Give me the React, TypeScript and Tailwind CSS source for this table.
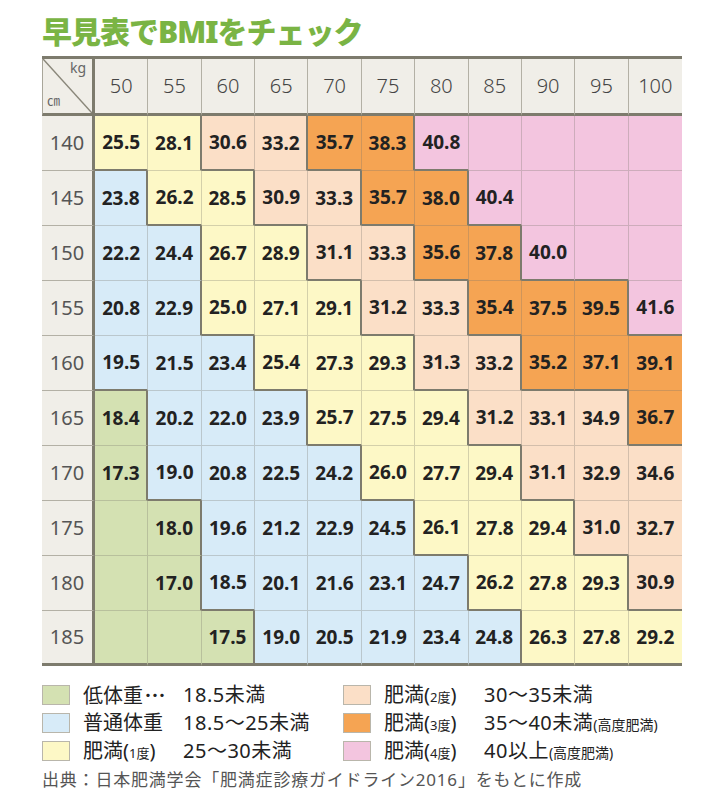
import React from 'react'

const heights = [140, 145, 150, 155, 160, 165, 170, 175, 180, 185]
const weights = [50, 55, 60, 65, 70, 75, 80, 85, 90, 95, 100]

// null = blank cell (colour still shown)
const rows: (string | null)[][] = [
  ['25.5', '28.1', '30.6', '33.2', '35.7', '38.3', '40.8', null, null, null, null],
  ['23.8', '26.2', '28.5', '30.9', '33.3', '35.7', '38.0', '40.4', null, null, null],
  ['22.2', '24.4', '26.7', '28.9', '31.1', '33.3', '35.6', '37.8', '40.0', null, null],
  ['20.8', '22.9', '25.0', '27.1', '29.1', '31.2', '33.3', '35.4', '37.5', '39.5', '41.6'],
  ['19.5', '21.5', '23.4', '25.4', '27.3', '29.3', '31.3', '33.2', '35.2', '37.1', '39.1'],
  ['18.4', '20.2', '22.0', '23.9', '25.7', '27.5', '29.4', '31.2', '33.1', '34.9', '36.7'],
  ['17.3', '19.0', '20.8', '22.5', '24.2', '26.0', '27.7', '29.4', '31.1', '32.9', '34.6'],
  [null, '18.0', '19.6', '21.2', '22.9', '24.5', '26.1', '27.8', '29.4', '31.0', '32.7'],
  [null, '17.0', '18.5', '20.1', '21.6', '23.1', '24.7', '26.2', '27.8', '29.3', '30.9'],
  [null, null, '17.5', '19.0', '20.5', '21.9', '23.4', '24.8', '26.3', '27.8', '29.2'],
]

const bgs = [
  'bg-[#d4e1b2]',
  'bg-[#d7ebf8]',
  'bg-[#fdf8c6]',
  'bg-[#fbdfc7]',
  'bg-[#f5a453]',
  'bg-[#f3c5df]',
]

const catOf = (r: number, c: number) => {
  const v = rows[r][c]
  if (v === null) return r < 5 ? 5 : 0
  const n = parseFloat(v)
  if (n < 18.5) return 0
  if (n < 25) return 1
  if (n < 30) return 2
  if (n < 35) return 3
  if (n < 40) return 4
  return 5
}

const font = { fontFamily: '"Noto Sans", "Noto Sans CJK JP", sans-serif' }

const Legend = ({
  color,
  label,
  deg,
  dots,
  value,
  note,
}: {
  color: string
  label: string
  deg?: string
  dots?: boolean
  value: string
  note?: string
}) => (
  <div className="flex items-center h-[28px]">
    <span className={`w-[28px] h-[20px] border border-[#b9b6ab] ${color}`} />
    <span className="ml-[13px] w-[100px] whitespace-nowrap">
      {label}
      {dots ? <span className="font-['Noto_Sans_CJK_JP'] tracking-[-3px]">･･･</span> : null}
      {deg ? (
        <>
          (<span className="text-[13px]">{deg}</span>)
        </>
      ) : null}
    </span>
    <span className="whitespace-nowrap tracking-[0.5px]">
      {value}
      {note ? <span className="text-[14px] tracking-normal">(高度肥満)</span> : null}
    </span>
  </div>
)

export default function App() {
  return (
    <div className="w-[720px] h-[811px] bg-white pl-[42px] pt-[6px]" style={font}>
      <h1 className="h-[50px] flex items-center text-[30px] font-black tracking-[-1px] text-[#7ab444]">
        早見表でBMIをチェック
      </h1>

      <div className="w-[640px] grid grid-cols-[53px_repeat(11,minmax(0,1fr))] border-t-[3px] border-[#7d7b6d]">
        <div className="relative h-[57px] bg-[#f0eee8] border-l border-l-[#a9a69a] border-r-[3px] border-r-[#7d7b6d] border-b-[3px] border-b-[#7d7b6d]">
          <svg className="absolute inset-0 w-full h-full" viewBox="0 0 49 54" preserveAspectRatio="none">
            <line x1="0" y1="0" x2="49" y2="54" stroke="#8a877a" strokeWidth="1.5" />
          </svg>
          <span className="absolute right-[6px] top-[2px] text-[14px] leading-none text-[#666]">kg</span>
          <span className="absolute left-[4px] bottom-[6px] text-[13px] leading-none text-[#666]">㎝</span>
        </div>
        {weights.map((w, i) => (
          <div
            key={w}
            className={`h-[57px] flex items-center justify-center bg-[#f0eee8] text-[20px] font-light text-[#444] border-b-[3px] border-b-[#7d7b6d] ${
              i < weights.length - 1 ? 'border-r border-r-[#b3b0a5]' : ''
            }`}
          >
            {w}
          </div>
        ))}

        {heights.map((h, r) => (
          <React.Fragment key={h}>
            <div
              className={`h-[55px] flex items-center justify-center bg-[#f0eee8] text-[20px] text-[#555] border-r-[3px] border-r-[#7d7b6d] ${
                r < heights.length - 1 ? 'border-b border-b-[#b3b0a5]' : 'border-b-[3px] border-b-[#7d7b6d]'
              }`}
            >
              {h}
            </div>
            {rows[r].map((v, c) => {
              const cat = catOf(r, c)
              const last = c === weights.length - 1
              const right = last
                ? ''
                : catOf(r, c + 1) !== cat
                  ? 'border-r-2 border-r-[#7d7b6d]'
                  : 'border-r border-r-[#77756a]/30'
              const bottom =
                r === heights.length - 1
                  ? 'border-b-[3px] border-b-[#7d7b6d]'
                  : catOf(r + 1, c) !== cat
                    ? 'border-b-2 border-b-[#7d7b6d]'
                    : 'border-b border-b-[#77756a]/30'
              return (
                <div
                  key={c}
                  className={`h-[55px] flex items-center justify-center text-[19px] font-bold text-[#222] ${bgs[cat]} ${right} ${bottom}`}
                >
                  {v}
                </div>
              )
            })}
          </React.Fragment>
        ))}
      </div>

      <div className="mt-[15px] grid grid-cols-[301px_1fr] text-[20px] text-[#222]">
        <div className="flex flex-col">
          <Legend color="bg-[#d4e1b2]" label="低体重" dots value="18.5未満" />
          <Legend color="bg-[#d7ebf8]" label="普通体重" value="18.5〜25未満" />
          <Legend color="bg-[#fdf8c6]" label="肥満" deg="1度" value="25〜30未満" />
        </div>
        <div className="flex flex-col">
          <Legend color="bg-[#fbdfc7]" label="肥満" deg="2度" value="30〜35未満" />
          <Legend color="bg-[#f5a453]" label="肥満" deg="3度" value="35〜40未満" note="y" />
          <Legend color="bg-[#f3c5df]" label="肥満" deg="4度" value="40以上" note="y" />
        </div>
      </div>

      <p className="mt-[2px] text-[17px] tracking-[0.8px] text-[#555]">
        出典：日本肥満学会「肥満症診療ガイドライン2016」をもとに作成
      </p>
    </div>
  )
}
